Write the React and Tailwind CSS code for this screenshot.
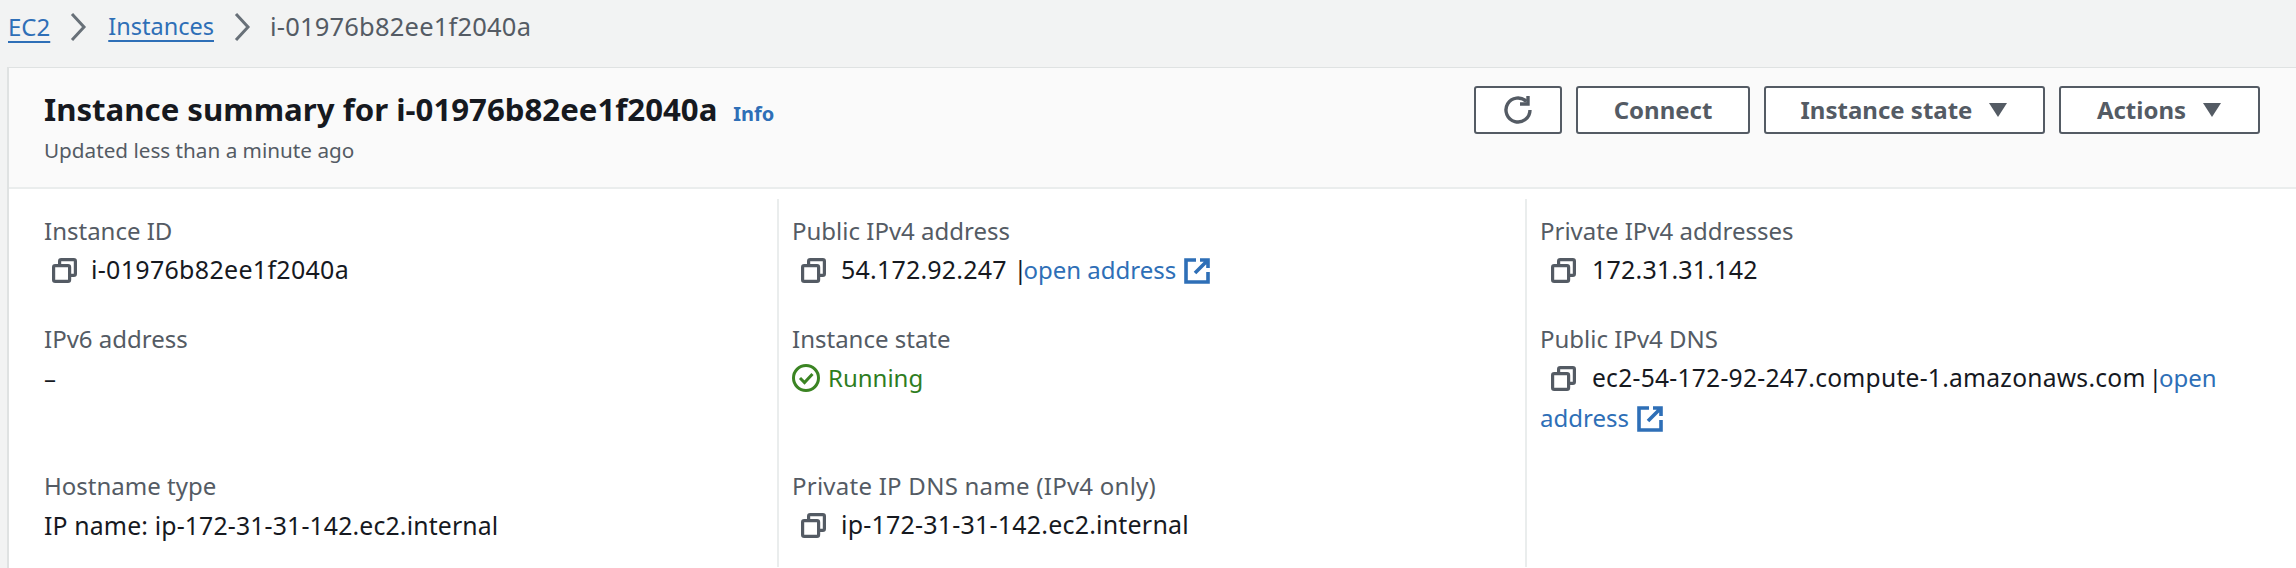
import React from "react";

const valueText = "text-[25px] tracking-[0.2px]";

function Copy() {
  return (
    <svg viewBox="0 0 25 25" className="w-[25px] h-[25px] shrink-0" fill="none" stroke="#545b64" strokeWidth="3.2">
      <rect x="1.6" y="7.6" width="16" height="15.8" rx="1.6" />
      <path d="M7.6 7.6V3.2a1.6 1.6 0 0 1 1.6-1.6h12.6a1.6 1.6 0 0 1 1.6 1.6v12.6a1.6 1.6 0 0 1-1.6 1.6h-4.2" />
    </svg>
  );
}

function External() {
  return (
    <svg viewBox="0 0 26 26" className="inline-block w-[26px] h-[26px] ml-[8px] align-[-5px]" fill="none" stroke="#2e6fb7" strokeWidth="3.6">
      <path d="M12 2H2v22h22V14" />
      <path d="M16 2h8v8M24 2 11 15" />
    </svg>
  );
}

function Label({ children, className = "" }) {
  return <div className={`text-[#545b64] h-[36px] leading-[36px] ${className}`}>{children}</div>;
}

function Copyable({ children, pl, gap }) {
  return (
    <div className={`flex items-center ${pl} ${gap} mt-[3px] h-[36px]`}>
      <Copy />
      <span className="whitespace-nowrap">{children}</span>
    </div>
  );
}

function Btn({ w, children }) {
  return (
    <button className={`${w} h-[48px] flex items-center justify-center gap-[16px] bg-white border-2 border-[#545b64] rounded-[3px] text-[#545b64] font-bold text-[24px]`}>
      {children}
    </button>
  );
}

function Caret() {
  return (
    <svg viewBox="0 0 20 16" className="w-[20px] h-[16px]" fill="#545b64">
      <path d="M1 1h18L10 15z" />
    </svg>
  );
}

function Chevron({ className }) {
  return (
    <svg viewBox="0 0 18 30" className={`w-[18px] h-[30px] ${className}`} fill="none" stroke="#687078" strokeWidth="3">
      <path d="M3 2l12 13L3 28" />
    </svg>
  );
}

export default function App() {
  return (
    <div className="w-[2296px] h-[568px] overflow-hidden bg-[#f2f3f3] text-[24px] text-[#16191f]" style={{ fontFamily: '"Noto Sans", sans-serif' }}>
      <nav className="h-[67px] pl-[8px] pb-[14px] flex items-center text-[#545b64]">
        <a className="text-[#2e6fb7] underline underline-offset-[5px]">EC2</a>
        <Chevron className="ml-[19px] mr-[21px]" />
        <a className="text-[#2e6fb7] underline underline-offset-[5px] text-[23.5px]">Instances</a>
        <Chevron className="mx-[19px]" />
        <span className="text-[25.5px] tracking-[0.2px]">i-01976b82ee1f2040a</span>
      </nav>

      <section className="ml-[7px] h-[501px] bg-white border-l-2 border-t border-[#dfe2e2]">
        <header className="h-[121px] bg-[#fafafa] border-b-2 border-[#eaeded] flex justify-between pl-[35px] pr-[36px]">
          <div className="pt-[19px]">
            <div className="flex items-baseline gap-[16px]">
              <h1 className="text-[31.2px] font-bold leading-[44px] text-[#16191f]">Instance summary for i-01976b82ee1f2040a</h1>
              <a className="text-[20px] font-bold text-[#2e6fb7]">Info</a>
            </div>
            <p className="text-[#545b64] text-[20.7px] leading-[39px]">Updated less than a minute ago</p>
          </div>
          <div className="flex gap-[14px] pt-[18px]">
            <Btn w="w-[88px]">
              <svg viewBox="0 0 32 32" className="w-[32px] h-[32px]" fill="none" stroke="#545b64" strokeWidth="3.4">
                <path d="M24.5 7.5A12 12 0 1 0 28 16" />
                <path d="M26 2v8h-8" />
              </svg>
            </Btn>
            <Btn w="w-[174px]">Connect</Btn>
            <Btn w="w-[281px]">Instance state<Caret /></Btn>
            <Btn w="w-[201px]">Actions<Caret /></Btn>
          </div>
        </header>

        <div className="grid grid-cols-[770px_748px_1fr] h-[378px] pt-[10px]">
          <div className="pl-[35px] border-r-2 border-[#eaeded]">
            <div className="pt-[14px]">
              <Label>Instance ID</Label>
              <Copyable pl="pl-[8px]" gap="gap-[14px]"><span className="text-[25px] tracking-[0.3px]">i-01976b82ee1f2040a</span></Copyable>
            </div>
            <div className="pt-[33px]">
              <Label>IPv6 address</Label>
              <div className="mt-[3px] h-[36px] leading-[36px]">–</div>
            </div>
            <div className="pt-[72px]">
              <Label>Hostname type</Label>
              <div className="mt-[3px] h-[36px] leading-[36px] text-[24.8px] tracking-[0.15px]">IP name: ip-172-31-31-142.ec2.internal</div>
            </div>
          </div>

          <div className="pl-[13px] border-r-2 border-[#eaeded]">
            <div className="pt-[14px]">
              <Label>Public IPv4 address</Label>
              <Copyable pl="pl-[9px]" gap="gap-[15px]"><span className={valueText}>54.172.92.247 |</span><a className="text-[#2e6fb7] -ml-[4px]">open address</a><External /></Copyable>
            </div>
            <div className="pt-[33px]">
              <Label>Instance state</Label>
              <div className="flex items-center gap-[8px] mt-[3px] h-[36px] text-[#2e7d1e]">
                <svg viewBox="0 0 28 28" className="w-[28px] h-[28px]" fill="none" stroke="#3b8423" strokeWidth="3">
                  <circle cx="14" cy="14" r="12.5" />
                  <path d="M8 14l4.5 4.5L20.5 10" />
                </svg>
                Running
              </div>
            </div>
            <div className="pt-[72px]">
              <Label className="tracking-[0.25px]">Private IP DNS name (IPv4 only)</Label>
              <Copyable pl="pl-[9px]" gap="gap-[15px]"><span className={valueText}>ip-172-31-31-142.ec2.internal</span></Copyable>
            </div>
          </div>

          <div className="pl-[13px]">
            <div className="pt-[14px]">
              <Label>Private IPv4 addresses</Label>
              <Copyable pl="pl-[11px]" gap="gap-[16px]"><span className={valueText}>172.31.31.142</span></Copyable>
            </div>
            <div className="pt-[33px]">
              <Label>Public IPv4 DNS</Label>
              <div className="mt-[1px] leading-[40px] w-[720px]">
                <span className="inline-flex items-center gap-[16px] pl-[11px] h-[40px] align-top"><Copy /><span className="text-[24.6px] tracking-[0.25px]">ec2-54-172-92-247.compute-1.amazonaws.com</span></span>
                <span className="ml-[3px]">|</span><a className="text-[#2e6fb7] -ml-[3px]">open address</a><External />
              </div>
            </div>
          </div>
        </div>
      </section>
    </div>
  );
}
